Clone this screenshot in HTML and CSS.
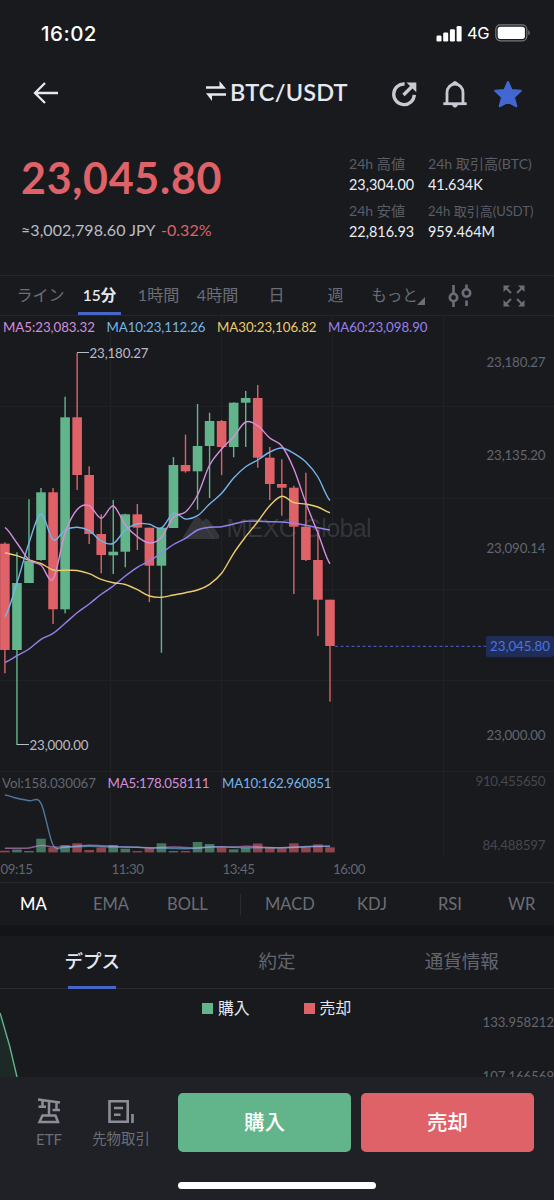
FILE: index.html
```html
<!DOCTYPE html>
<html lang="ja">

<head>
  <meta charset="UTF-8">
  <meta name="viewport" content="width=device-width, initial-scale=1.0">
  <title>BTC/USDT</title>
  <link rel="stylesheet" href="styles.css">
</head>

<body>
  <div class="status-bar">
    <span class="clock">16:02</span>
    <svg class="signal" width="26" height="17" viewBox="0 0 26 17" fill="#fff">
      <rect x="0.5" y="10.5" width="5" height="6" rx="1.3" />
      <rect x="7.2" y="7.5" width="5" height="9" rx="1.3" />
      <rect x="13.9" y="4.3" width="5" height="12.2" rx="1.3" />
      <rect x="20.6" y="1" width="5" height="15.5" rx="1.3" />
    </svg>
    <span class="network">4G</span>
    <svg class="battery" width="36" height="18" viewBox="0 0 36 18">
      <rect x="0.8" y="0.8" width="31" height="16" rx="4.5" fill="none" stroke="#77787b" stroke-width="1.2" />
      <rect x="2.7" y="2.7" width="27.2" height="12.2" rx="2.6" fill="#fff" />
      <path d="M33.3 6.3c2 .8 2 4.2 0 5z" fill="#77787b" />
    </svg>
  </div>

  <header class="header">
    <svg class="back" width="26" height="22" viewBox="0 0 26 22" fill="none" stroke="#e6e8f0" stroke-width="2.3">
      <path d="M12 1L2 11l10 10M2 11h23" />
    </svg>
    <div class="pair">
      <svg width="20" height="20" viewBox="0 0 20 20" fill="#e6e8f0">
        <path d="M0 5.3h13.5V0L20 7.8H0zM20 12.2H0L6 20v-5.3H20z" />
      </svg>
      <h1>BTC/USDT</h1>
    </div>
    <svg class="share" width="26" height="26" viewBox="0 0 26 26" fill="none" stroke="#c7cad3" stroke-width="3.3">
      <path d="M13.6 3A10.3 10.3 0 1 0 23.3 13.8" />
      <path d="M12.5 14L21 5.5" />
      <path d="M15.5 1.5h9.8v9.8z" fill="#c7cad3" stroke="none" />
    </svg>
    <svg class="bell" width="24" height="28" viewBox="0 0 24 28" fill="none" stroke="#c7cad3" stroke-width="2.8">
      <path d="M4 23V12.5a8 8.5 0 0 1 16 0V23" />
      <path d="M0.3 23.7h23.4" />
      <path d="M8.5 3.5Q12-1.5 15.5 3.5zM8.5 24.5h7l-2 2.6q-1.5 1-3 0z" fill="#c7cad3" stroke="none" />
    </svg>
    <svg class="star" width="28" height="28" viewBox="0 0 28 28" fill="#4267d0" stroke="#4267d0" stroke-width="2" stroke-linejoin="round">
      <path d="M14 2l3.5 7.9 9.3.9-6.8 6.4 2.3 9.1L14 21.8l-8.3 4.5L8 17.2 1.2 10.8l9.3-.9z" />
    </svg>
  </header>

  <section class="ticker">
    <div class="quote">
      <div class="last-price">23,045.80</div>
      <div class="fiat">≈3,002,798.60 JPY <span class="down">-0.32%</span></div>
    </div>
    <dl class="stats">
      <div>
        <dt>24h 高値</dt>
        <dd>23,304.00</dd>
        <dt>24h 安値</dt>
        <dd>22,816.93</dd>
      </div>
      <div>
        <dt>24h 取引高(BTC)</dt>
        <dd>41.634K</dd>
        <dt class="small">24h 取引高(USDT)</dt>
        <dd>959.464M</dd>
      </div>
    </dl>
  </section>

  <nav class="intervals">
    <span>ライン</span>
    <span class="active">15分</span>
    <span>1時間</span>
    <span>4時間</span>
    <span>日</span>
    <span>週</span>
    <span class="more">もっと<i></i></span>
    <svg width="24" height="24" viewBox="0 0 24 24" fill="none" stroke="#6b6e76" stroke-width="2.6">
      <path d="M5.5 1v9M5.5 17v6M18.5 .5v5M18.5 16.5V22" />
      <circle cx="5.5" cy="13.5" r="3.7" />
      <circle cx="18.5" cy="9" r="3.7" />
    </svg>
    <svg width="22" height="22" viewBox="0 0 22 22" fill="#6b6e76" stroke="#6b6e76" stroke-width="2">
      <path d="M3 3l5 5M19 3l-5 5M3 19l5-5M19 19l-5-5" />
      <path stroke="none" d="M.5.5H7L.5 7zM21.5.5H15L21.500 7zM.5 21.5V15L7 21.5zM21.5 21.5V15L15 21.5z" />
    </svg>
  </nav>

  <svg class="chart" id="chart" width="554" height="566" viewBox="0 316 554 566">
    <g id="grid" class="grid"></g>
    <g id="volume"></g>
    <g id="candles"></g>
    <g class="watermark">
      <path d="M183 537l11-18q3.5-4 7 0l13 20H185q-3-1-2-2z" />
      <path d="M202 522q4-6 7.5-1L219 535q1 3-1 4h-5z" />
      <text x="226.5" y="537" textLength="145">MEXC Global</text>
    </g>
    <g id="top-candles"></g>
    <g id="lines" class="lines"></g>

    <path class="marker" d="M77 352.5h12M17 744.5h12" />
    <text class="mark" x="89.5" y="357.5" textLength="59">23,180.27</text>
    <text class="mark" x="29.5" y="750" textLength="59">23,000.00</text>

    <text class="ma5" x="3" y="331.5" textLength="92">MA5:23,083.32</text>
    <text class="ma10" x="106.5" y="331.5" textLength="99">MA10:23,112.26</text>
    <text class="ma30" x="217" y="331.5" textLength="99.5">MA30:23,106.82</text>
    <text class="ma60" x="328" y="331.5" textLength="99.5">MA60:23,098.90</text>

    <text class="axis" x="486.5" y="366.5" textLength="59">23,180.27</text>
    <text class="axis" x="486.5" y="460" textLength="59">23,135.20</text>
    <text class="axis" x="486.5" y="553" textLength="59">23,090.14</text>
    <text class="axis" x="486.5" y="740" textLength="59">23,000.00</text>
    <path class="price-line" d="M335 646.3H486" />
    <rect class="price-tag" x="486" y="636" width="68" height="21" rx="2" />
    <text class="price-text" x="490" y="650.8" textLength="60">23,045.80</text>

    <text class="axis" x="2" y="788.3" textLength="94">Vol:158.030067</text>
    <text class="ma5" x="107.5" y="788.3" textLength="102">MA5:178.058111</text>
    <text class="ma10" x="222" y="788.3" textLength="109.5">MA10:162.960851</text>
    <text class="axis dim" x="475.5" y="785.5" textLength="70">910.455650</text>
    <text class="axis dim" x="482.5" y="850" textLength="63">84.488597</text>
    <text class="axis" x="0.5" y="873.5" textLength="32.5">09:15</text>
    <text class="axis" x="111.5" y="873.5" textLength="32.5">11:30</text>
    <text class="axis" x="222.5" y="873.5" textLength="32.5">13:45</text>
    <text class="axis" x="333" y="873.5" textLength="32.5">16:00</text>
  </svg>

  <nav class="indicators">
    <span class="active">MA</span>
    <span>EMA</span>
    <span>BOLL</span>
    <i></i>
    <span>MACD</span>
    <span>KDJ</span>
    <span>RSI</span>
    <span>WR</span>
  </nav>

  <nav class="sections">
    <span class="active">デプス</span>
    <span>約定</span>
    <span>通貨情報</span>
  </nav>

  <section class="depth">
    <svg class="depth-area" width="20" height="88" viewBox="0 0 20 88">
      <path d="M0 24Q10 55 17 88H0z" fill="#1d2927" />
      <path d="M0 24Q10 55 17 88" fill="none" stroke="#62b58a" stroke-width="1.4" />
    </svg>
    <div class="legend">
      <span class="buy">購入</span>
      <span class="sell">売却</span>
    </div>
    <div class="depth-axis">
      <span>133.958212</span>
      <span>107.166569</span>
    </div>
  </section>

  <footer class="bottom-bar">
    <div class="actions">
      <a class="shortcut etf">
        <svg width="24" height="26" viewBox="0 0 24 26" fill="none" stroke="#8b8e97" stroke-width="2.5">
          <path d="M1 1.5l22 3M5.5 2v7M1.5 8.8h7.5M12 3v15M19.5 4v8M15.5 12h7.5" />
          <path d="M5.5 17.5h13l2.5 6.5H2.5z" />
        </svg>
        ETF
      </a>
      <a class="shortcut futures">
        <svg width="26" height="26" viewBox="0 0 26 26" fill="none" stroke="#8b8e97" stroke-width="2.6">
          <path d="M1.5 3.3h18.2v20.4H1.5zM6 10h9M6 16.7h6.5M24.5 16v9" />
        </svg>
        先物取引
      </a>
      <button class="btn buy-btn">購入</button>
      <button class="btn sell-btn">売却</button>
    </div>
    <div class="home-indicator"></div>
  </footer>

  <script src="chart.js"></script>
</body>

</html>
```

FILE: styles.css
```css
* {
  box-sizing: border-box;
}

body {
  margin: 0;
  width: 554px;
  height: 1200px;
  overflow: hidden;
  display: flex;
  flex-direction: column;
  background: #191a1e;
  color: #e6e8f0;
  font-family: Lato, "Noto Sans CJK JP", sans-serif;
}

svg {
  display: block;
  flex-shrink: 0;
}

/* status bar */
.status-bar {
  height: 66px;
  padding: 0 23px 0 41px;
  display: flex;
  align-items: center;
  color: #fff;
  font-family: Inter, sans-serif;
}

.clock {
  font-size: 20.5px;
  font-weight: 500;
  letter-spacing: 0.5px;
}

.signal {
  margin-left: auto;
}

.network {
  margin-left: 5px;
  width: 22px;
  font-size: 16.5px;
  font-weight: 400;
  letter-spacing: -0.3px;
}

.battery {
  margin-left: 6px;
}

/* header */
.header {
  height: 54px;
  padding: 0 31px 0 33px;
  display: flex;
  align-items: center;
}

.pair {
  margin-left: 147px;
  width: 185px;
  display: flex;
  align-items: center;
  gap: 4px;
}

.pair svg {
  margin-top: -4px;
}

.pair h1 {
  margin: 0;
  font-size: 23.5px;
  font-weight: 600;
  line-height: 52px;
  padding-bottom: 2px;
  letter-spacing: 0.2px;
}

.share {
  margin: 2px 26px 0 0;
}

.bell {
  margin: 2px 27px 0 0;
}

.star {
  margin-top: 1px;
}

/* ticker */
.ticker {
  height: 155px;
  padding: 31px 20px 0 21px;
  display: flex;
  justify-content: space-between;
}

.last-price {
  color: #de6267;
  font-size: 43px;
  font-weight: 700;
  line-height: 54px;
  letter-spacing: 0.7px;
}

.fiat {
  margin-top: 12px;
  font-size: 16px;
  line-height: 26px;
  letter-spacing: 0.05px;
  color: #b9bcc6;
  white-space: nowrap;
}

.down {
  color: #de6267;
  margin-left: 2px;
}

.stats {
  margin: 3px 0 0;
  display: flex;
  width: 185px;
  font-size: 14.4px;
  white-space: nowrap;
}

.stats > div:first-child {
  width: 79px;
  flex-shrink: 0;
}

.stats dt {
  height: 21px;
  line-height: 20px;
  color: #5a5d65;
  font-size: 14.1px;
}

.stats dt.small {
  font-size: 13px;
}

.stats dd {
  margin: 0 0 5px;
  height: 21px;
  line-height: 20px;
  color: #eceef3;
}

/* chart interval tabs */
.intervals {
  height: 41px;
  padding-left: 11px;
  display: grid;
  grid-template-columns: repeat(6, 59px) 66px 57px 52px;
  align-items: center;
  justify-items: center;
  border-top: 1px solid #25272c;
  border-bottom: 1px solid #25272c;
  color: #6b6e76;
  font-size: 16px;
}

.intervals span {
  height: 39px;
  line-height: 38px;
}

.intervals .active {
  width: 43px;
  text-align: center;
  color: #e6e8f0;
  font-weight: 600;
  font-size: 15.5px;
  border-bottom: 3px solid #4766c8;
}

.intervals .more {
  display: flex;
  font-size: 15.5px;
}

.more i {
  align-self: center;
  margin: 11px 0 0 -1px;
  border-left: 8px solid transparent;
  border-bottom: 8px solid #6b6e76;
}

/* chart */
.chart {
  font-size: 13.3px;
}

.grid {
  stroke: #1f2125;
}

.watermark {
  fill: #85888f;
  fill-opacity: 0.25;
  font-family: "Liberation Sans", sans-serif;
  font-size: 25px;
}

.lines path {
  fill: none;
  stroke-width: 1.4;
}

.lines .s5 {
  stroke: #d58edb;
}

.lines .s10 {
  stroke: #74b5ec;
}

.lines .s30 {
  stroke: #edcc6b;
}

.lines .s60 {
  stroke: #9680ee;
}

.lines .faded {
  opacity: 0.6;
}

.up-fill {
  fill: #62b58a;
}

.down-fill {
  fill: #de6267;
}

#volume {
  opacity: 0.6;
}

.marker {
  stroke: #b9bcc6;
}

.mark {
  fill: #b9bcc6;
}

.ma5 {
  fill: #d58edb;
}

.ma10 {
  fill: #74b5ec;
}

.ma30 {
  fill: #edcc6b;
}

.ma60 {
  fill: #9680ee;
}

.axis {
  fill: #63666e;
}

.dim {
  fill: #46484e;
}

.price-line {
  stroke: #4766c8;
  stroke-dasharray: 3 2.5;
}

.price-tag {
  fill: #202e57;
}

.price-text {
  fill: #4b73e0;
}

/* indicator tabs */
.indicators {
  height: 43px;
  flex-shrink: 0;
  padding-left: 20px;
  display: grid;
  grid-template-columns: 73px 74px 73px 25px 92px 81px 70px 46px;
  align-items: center;
  border-top: 1px solid #25272c;
  color: #6b6e76;
  font-size: 16.5px;
  line-height: 20px;
}

.indicators .active {
  color: #fff;
  font-weight: 500;
}

.indicators i {
  width: 1px;
  height: 21px;
  background: #292b30;
}

/* section tabs */
.sections {
  height: 64px;
  flex-shrink: 0;
  display: grid;
  grid-template-columns: repeat(3, 1fr);
  justify-items: center;
  border-top: 11px solid #131418;
  border-bottom: 1px solid #2a2c31;
  color: #63666e;
  font-size: 18.5px;
  line-height: 50px;
}

.sections .active {
  height: 53px;
  color: #e6e8f0;
  font-weight: 500;
  background: linear-gradient(#4766c8, #4766c8) center bottom / 48px 3px no-repeat;
}

/* depth */
.depth {
  height: 88px;
  flex-shrink: 0;
  overflow: hidden;
  display: flex;
}

.legend {
  width: 413px;
  padding: 7px 0 0 182px;
  display: flex;
  gap: 54px;
  font-size: 15.8px;
  line-height: 24px;
}

.legend span {
  height: 24px;
  display: flex;
  align-items: center;
  gap: 5px;
}

.legend span::before {
  content: "";
  width: 11px;
  height: 11px;
  background: #62b58a;
}

.legend .sell::before {
  background: #de6267;
}

.depth-axis {
  margin: 6px 0 0 auto;
  display: flex;
  flex-direction: column;
  color: #63666e;
  font-size: 13.1px;
  line-height: 54px;
}

/* bottom bar */
.bottom-bar {
  height: 123px;
  flex-shrink: 0;
  padding: 16px 20px 0 13px;
  background: #1f2126;
}

.actions {
  display: flex;
  height: 59px;
}

.shortcut {
  width: 72px;
  padding-top: 5px;
  display: flex;
  flex-direction: column;
  align-items: center;
  gap: 4px;
  color: #6b6e76;
  font-size: 14.4px;
  line-height: 22px;
  white-space: nowrap;
}

.etf {
  font-size: 15px;
}

.btn {
  width: 173px;
  padding: 0 0 4px;
  border: none;
  border-radius: 5px;
  color: #fff;
  font-family: inherit;
  font-size: 20.5px;
  font-weight: 500;
}

.buy-btn {
  margin-left: 21px;
  background: #62b58a;
}

.sell-btn {
  margin-left: 10px;
  background: #de6267;
}

.home-indicator {
  width: 198px;
  height: 7px;
  margin: 30px 0 0 165px;
  border-radius: 4px;
  background: #fff;
}
```

FILE: chart.js
```js
const STEP = 12.04;
const BODY = 9.6;
const VOL_BASE = 852.4;

// direction, high, body top, body bottom, low, volume top
const candles = [
  ['d', 542.3, 543.7, 650, 673.3, 850.7],
  ['u', 552.3, 583, 650, 745, 849.5],
  ['u', 499.3, 560.7, 583, 583, 851],
  ['u', 488, 492.3, 560, 560.7, 838.7],
  ['d', 488, 492.3, 609.3, 624, 847.7],
  ['u', 396.7, 417.3, 609.3, 613.3, 845],
  ['d', 353, 417.3, 475, 490, 843.3],
  ['d', 466.3, 475, 534, 544, 850],
  ['d', 514.3, 534, 555, 573.3, 847.7],
  ['u', 500, 551.7, 555.3, 574, 845],
  ['u', 513.7, 514.3, 551.7, 567.3, 848.7],
  ['d', 504, 514.3, 527.7, 550, 851],
  ['d', 527.7, 527.7, 565.7, 602, 848.3],
  ['u', 527.7, 527.7, 565.7, 652.7, 843.3],
  ['u', 457, 465, 528, 528, 851],
  ['d', 434.7, 465, 471.3, 472.7, 851],
  ['u', 404, 446, 471.3, 509.7, 842],
  ['u', 412.7, 421, 446, 498, 844],
  ['d', 420, 421, 447, 475, 847.7],
  ['u', 402.3, 402.7, 447, 457.3, 849.3],
  ['u', 391, 398, 402.7, 447, 847.7],
  ['d', 385, 398, 457.7, 467.7, 843.5],
  ['d', 447, 457.7, 484, 500, 847.7],
  ['d', 459.3, 484, 487.7, 515.7, 848.3],
  ['d', 485.7, 487.7, 526.7, 594, 843.3],
  ['d', 472.7, 526.7, 560, 561, 847],
  ['d', 530, 560, 599.7, 636, 844.3],
  ['d', 599.7, 599.7, 646, 701.7, 847.3]
];

const series = {
  's60': [662.3, 655.7, 649, 639.3, 633.3, 623.3, 612.7, 604, 594.3, 586, 576, 567.3, 561, 553, 544.5, 538.3, 530, 527.3, 526.7, 524, 521.3, 521.3, 521.7, 522, 523.3, 525.3, 527.7, 530],
  's30': [553, 555.7, 560, 563.5, 570, 570.3, 570.5, 573.7, 579.3, 582.7, 584.5, 589.7, 596, 597.3, 595, 592.7, 590, 584.3, 573.3, 553.3, 536.7, 521.7, 505.7, 496.3, 502.7, 504, 507, 512.7],
  's10': [616.7, 583, 543, 514, 539.7, 530, 527.3, 530.7, 541, 543.5, 530, 523.7, 524.3, 528, 513.3, 519, 515.7, 504, 493.3, 478, 466.7, 460, 452, 448, 453.3, 462, 477, 500.5],
  's5': [527.5, 543, 560, 565.3, 579, 533, 509.5, 505.7, 518.3, 506, 525, 536.7, 543, 537.5, 517, 512, 495, 465, 449, 436.7, 422, 425.7, 438, 446, 469, 503, 533, 563.7],
  's5 faded': [848.3, 848.3, 848, 845.5, 847, 847, 846, 845.3, 845.7, 846.3, 847, 847.3, 848, 847.5, 847, 847.5, 848, 847, 846.7, 847, 846.3, 846.7, 847.5, 847.7, 847.3, 846.5, 846.5, 846],
  's10 faded': [795, 798.3, 800.7, 803.3, 845, 847, 846.7, 846.3, 846.7, 847, 847, 847.3, 847.7, 848, 848.5, 848.7, 848, 847, 847, 847.3, 847.7, 847.7, 847.7, 847.7, 847.3, 846.7, 846.3, 846.5]
};

function x(i) {
  return 4.9 + i * STEP;
}

function rect(cls, left, top, width, height) {
  return `<rect class="${cls}" x="${left.toFixed(2)}" y="${top}" width="${width}" height="${height.toFixed(2)}" />`;
}

// Catmull-Rom spline through the points
function spline(values) {
  let d = `M${x(0)} ${values[0]}`;
  for (let i = 0; i < values.length - 1; i++) {
    const p0 = values[Math.max(i - 1, 0)];
    const p1 = values[i];
    const p2 = values[i + 1];
    const p3 = values[Math.min(i + 2, values.length - 1)];
    d += `C${x(i) + STEP / 3} ${p1 + (p2 - p0) / 6} ${x(i + 1) - STEP / 3} ${p2 - (p3 - p1) / 6} ${x(i + 1)} ${p2}`;
  }
  return d;
}

let wicks = '';
let bodies = '';
let bars = '';
candles.forEach(([dir, high, top, bottom, low, vol], i) => {
  const cls = dir === 'u' ? 'up-fill' : 'down-fill';
  wicks += rect(cls, x(i) - 0.7, high, 1.4, low - high);
  bodies += rect(cls, x(i) - BODY / 2, top, BODY, bottom - top);
  bars += rect(cls, x(i) - BODY / 2, vol, BODY, VOL_BASE - vol);
});
document.getElementById('candles').innerHTML = wicks;
document.getElementById('top-candles').innerHTML = bodies;
document.getElementById('volume').innerHTML = bars;

document.getElementById('lines').innerHTML = Object.keys(series)
  .map(key => `<path class="${key}" d="${spline(series[key])}" />`)
  .join('');

const gridX = [110.5, 221.5, 332.5, 443.5].map(v => `M${v} 316V855`);
const gridY = [406.5, 498.5, 589.5, 680.5, 771.5].map(v => `M0 ${v}H554`);
document.getElementById('grid').innerHTML = `<path d="${gridX.concat(gridY).join('')}" />`;
```
